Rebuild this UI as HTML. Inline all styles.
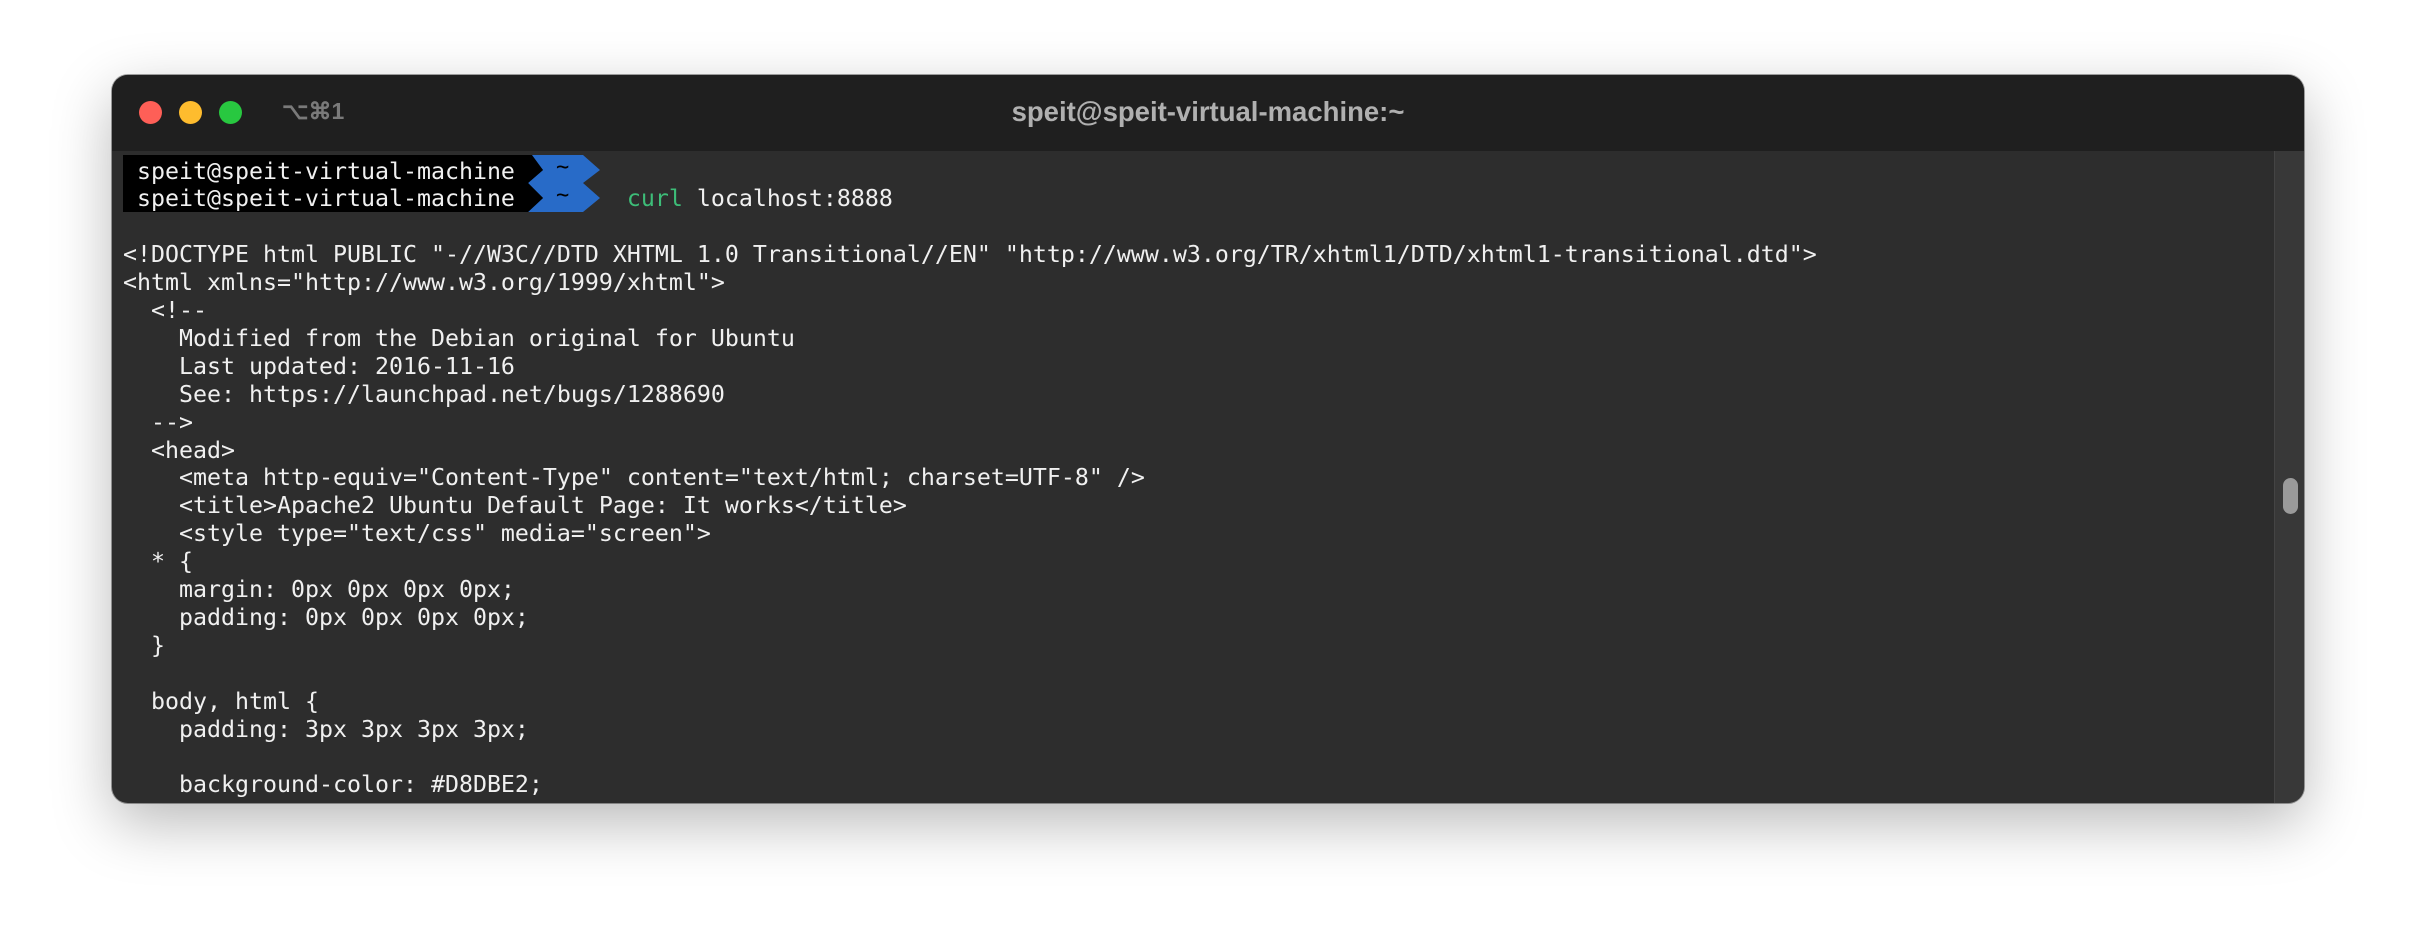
<!DOCTYPE html>
<html><head><meta charset="utf-8"><style>
body{margin:0;width:2416px;height:952px;background:#fff;overflow:hidden;position:relative;font-family:"DejaVu Sans Mono","Liberation Mono",monospace}
.win{position:absolute;left:112px;top:75px;width:2192px;height:728px;border-radius:16px;background:#2d2d2d;overflow:hidden;box-shadow:0 20px 60px rgba(0,0,0,.28),0 0 0 1px rgba(0,0,0,.35)}
.tb{position:absolute;left:0;top:0;right:0;height:76px;background:#1f1f1f}
.dot{position:absolute;top:26px;width:23px;height:23px;border-radius:50%}
.sb{position:absolute;left:2162px;top:76px;width:30px;bottom:0;background:#383838;border-left:1px solid #444}
.th{position:absolute;left:8px;top:327px;width:15px;height:36px;border-radius:8px;background:#9a9a9a}
pre{position:absolute;left:11px;top:82.5px;margin:0;font-size:23.25px;line-height:27.9px;color:#f0f0f0;font-family:"DejaVu Sans Mono","Liberation Mono",monospace}
.tl{position:absolute;left:444px;font-size:22px;color:#000;font-family:"DejaVu Sans Mono",monospace}
</style></head><body>
<div class="win">
<div class="tb">
<div class="dot" style="left:27px;background:#fe5f57"></div>
<div class="dot" style="left:67px;background:#febc2e"></div>
<div class="dot" style="left:107px;background:#28c840"></div>
<div style="position:absolute;left:170px;top:23px;font:bold 23px 'Liberation Sans',sans-serif;color:#7a7a7a">⌥⌘1</div>
<div style="position:absolute;left:0;right:0;top:21px;text-align:center;font:bold 27.5px 'Liberation Sans',sans-serif;color:#b0b0b0">speit@speit-virtual-machine:~</div>
</div>
<svg style="position:absolute;left:0;top:0" width="600" height="220">
<polygon points="11,80 420,80 431,95 420,108 431,123 420,137 11,137" fill="#000"/>
<polygon points="416,80 471,80 488,95 471,108 488,123 471,137 416,137 431,123 416,108 431,95" fill="#286bc8"/>
<polygon points="416,108 431,95 420,80 416,80" fill="#000"/>
<polygon points="416,137 431,123 416,108" fill="#000"/>
</svg>
<div class="tl" style="top:80px">~</div>
<div class="tl" style="top:108px">~</div>
<pre> speit@speit-virtual-machine
 speit@speit-virtual-machine        <span style="color:#3dbd78">curl</span> localhost:8888

&lt;!DOCTYPE html PUBLIC "-//W3C//DTD XHTML 1.0 Transitional//EN" "http://www.w3.org/TR/xhtml1/DTD/xhtml1-transitional.dtd"&gt;
&lt;html xmlns="http://www.w3.org/1999/xhtml"&gt;
  &lt;!--
    Modified from the Debian original for Ubuntu
    Last updated: 2016-11-16
    See: https://launchpad.net/bugs/1288690
  --&gt;
  &lt;head&gt;
    &lt;meta http-equiv="Content-Type" content="text/html; charset=UTF-8" /&gt;
    &lt;title&gt;Apache2 Ubuntu Default Page: It works&lt;/title&gt;
    &lt;style type="text/css" media="screen"&gt;
  * {
    margin: 0px 0px 0px 0px;
    padding: 0px 0px 0px 0px;
  }

  body, html {
    padding: 3px 3px 3px 3px;

    background-color: #D8DBE2;</pre>
<div class="sb"><div class="th"></div></div>
</div>
</body></html>
